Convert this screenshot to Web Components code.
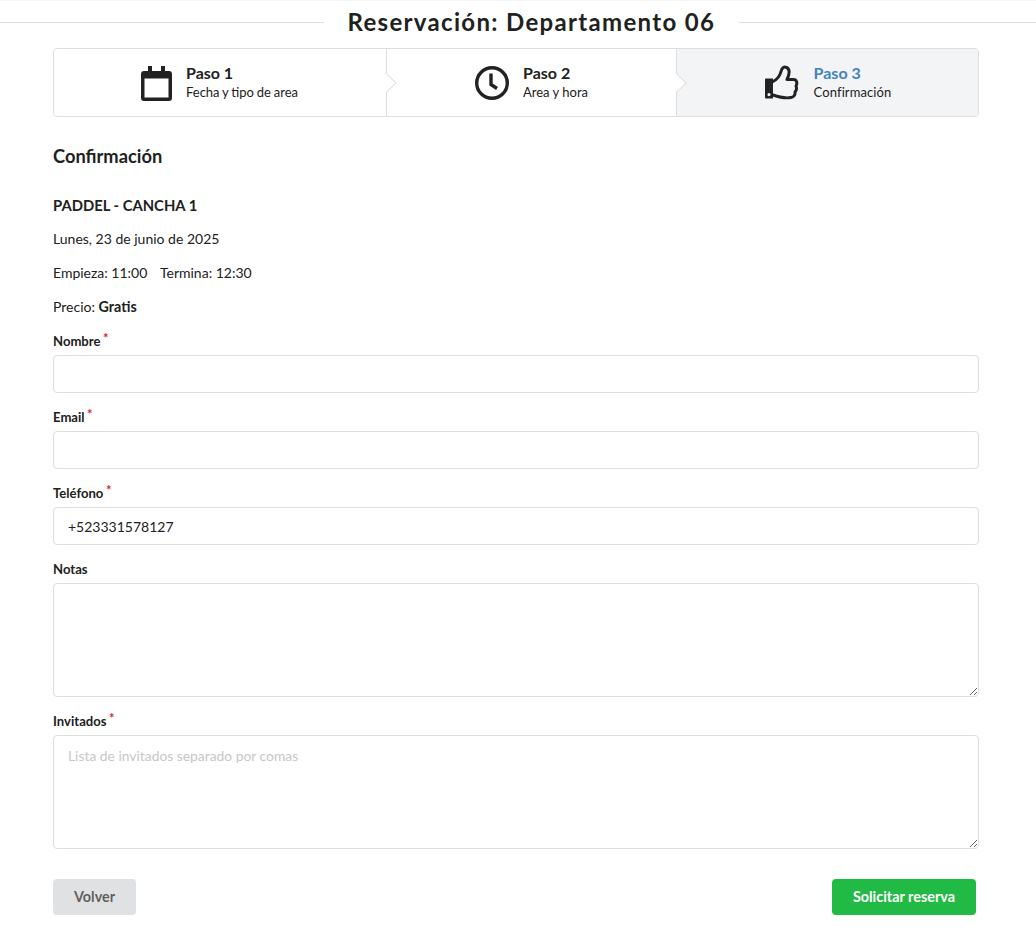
<!DOCTYPE html>
<html lang="es">
<head>
<meta charset="utf-8">
<title>Reservación</title>
<style>
  html, body { margin: 0; background: #fff; }
  body { font: 14px/20px Lato, "Noto Sans", sans-serif; color: rgba(0,0,0,.87); }
</style>
</head>
<body>
<booking-page>
  <page-title>Reservación: Departamento 06</page-title>
  <step-bar>
    <step-item title="Paso 1" desc="Fecha y tipo de area" arrow style="--desc-words:-.5px;--icon-shift:-1px">
      <svg slot="icon" width="31" height="36" viewBox="141 64 31 36"><path fill="#222" fill-rule="evenodd" d="M148 65h4v5h9v-5h4v5h4a3 3 0 0 1 3 3v24a3 3 0 0 1-3 3h-25a3 3 0 0 1-3-3V73a3 3 0 0 1 3-3h4zM144.500 77.500v19h24v-19z"/></svg>
    </step-item>
    <step-item title="Paso 2" desc="Area y hora" arrow>
      <svg slot="icon" width="34" height="34" viewBox="475 65.500 34 34"><circle cx="492" cy="82.500" r="15.300" fill="none" stroke="#222" stroke-width="3.400"/><path d="M491 73v11l6 4" fill="none" stroke="#222" stroke-width="3.400"/></svg>
    </step-item>
    <step-item title="Paso 3" desc="Confirmación" active style="--desc-track:.1px;--icon-shift:1px">
      <svg slot="icon" width="35" height="35" viewBox="764 65.500 35 35"><path fill="#222" fill-rule="evenodd" d="M765 79h7v20h-7a1 1 0 0 1-1-1V80a1 1 0 0 1 1-1zM768 93.500a1.600 1.600 0 1 0 0 3.200a1.600 1.600 0 0 0 0-3.200z"/><path fill="none" stroke="#222" stroke-width="3" stroke-linejoin="round" stroke-linecap="round" d="M772 82C776 80 779 76 780 72C781 68 783 67 785 67.800C789 69 789 74 786 80L792.500 80C796 80 796.500 84 795 86.500C796 89 795.500 91 794 92.500C794.500 95 793 97.500 790 98C785 99 779 98 772 95.500"/></svg>
    </step-item>
  </step-bar>
  <booking-summary></booking-summary>
  <form-field label="Nombre" required></form-field>
  <form-field label="Email" required></form-field>
  <form-field label="Teléfono" required value="+523331578127"></form-field>
  <form-field label="Notas" multiline></form-field>
  <form-field label="Invitados" required multiline placeholder="Lista de invitados separado por comas"></form-field>
  <form-actions>
    <ui-button slot="back">Volver</ui-button>
    <ui-button slot="submit" kind="green">Solicitar reserva</ui-button>
  </form-actions>
</booking-page>

<script>
class BookingPage extends HTMLElement {
  constructor() {
    super();
    this.attachShadow({mode: 'open'}).innerHTML = `
      <style>
        :host { display: block; padding: 0 57px 27px 53px; border-top: 1px solid #f7f7f7; }
      </style>
      <slot></slot>`;
  }
}

class PageTitle extends HTMLElement {
  constructor() {
    super();
    this.attachShadow({mode: 'open'}).innerHTML = `
      <style>
        :host { display: flex; align-items: center; height: 42px; margin: 0 -57px 5px -53px; }
        i { height: 1px; background: #dedede; margin-top: 1px; }
        .left { flex: none; width: 324px; }
        .right { flex: 1; }
        h1 { margin: 0 24px 0 23.500px; font: 700 24px/30px Lato, sans-serif; letter-spacing: 1.320px; color: #212121; white-space: nowrap; }
      </style>
      <i class="left"></i><h1><slot></slot></h1><i class="right"></i>`;
  }
}

class StepBar extends HTMLElement {
  constructor() {
    super();
    this.attachShadow({mode: 'open'}).innerHTML = `
      <style>
        :host { display: grid; grid-template-columns: 333px 290px 1fr; height: 69px; box-sizing: border-box;
          border: 1px solid #dedede; border-radius: 4px; }
      </style>
      <slot></slot>`;
  }
}

class StepItem extends HTMLElement {
  constructor() {
    super();
    const title = this.getAttribute('title');
    const desc = this.getAttribute('desc');
    this.removeAttribute('title');
    this.attachShadow({mode: 'open'}).innerHTML = `
      <style>
        :host { display: flex; position: relative; align-items: center; justify-content: center; gap: 14px;
          border-right: 1px solid #dedede; background: #fff; border-radius: 4px 0 0 4px; }
        :host([active]) { background: #f3f4f5; border-right: 0; border-radius: 0 3px 3px 0; }
        :host([arrow])::after { content: ""; position: absolute; z-index: 2; top: 50%; right: 0; width: 15px; height: 15px;
          box-sizing: border-box; background: #fff; border: solid #dedede; border-width: 1px 1px 0 0;
          transform: translate(50%, -50%) rotate(45deg); }
        ::slotted(svg) { display: block; flex: none; margin-left: var(--icon-shift, 0); }
        .title { font-size: 16px; font-weight: 700; line-height: 16px; margin-bottom: 2px; color: #212121; }
        :host([active]) .title { color: #4183c4; }
        .desc { font-size: 13px; line-height: 18px; color: #212121;
          word-spacing: var(--desc-words, 0); letter-spacing: var(--desc-track, 0); }
      </style>
      <slot name="icon"></slot>
      <div><div class="title">${title}</div><div class="desc">${desc}</div></div>`;
  }
}

class BookingSummary extends HTMLElement {
  constructor() {
    super();
    this.attachShadow({mode: 'open'}).innerHTML = `
      <style>
        :host { display: block; color: #212121; }
        h2 { margin: 29px 0 28px; font: 700 18.300px/21px Lato, sans-serif; }
        h3 { margin: 0 0 14px; font: 700 14.800px/20px Lato, sans-serif; }
        p { margin: 0 0 14px; }
        b { font-weight: 700; font-size: 14.300px; }
        .gap { margin-left: 9px; }
      </style>
      <h2>Confirmación</h2>
      <h3>PADDEL - CANCHA 1</h3>
      <p>Lunes, 23 de junio de 2025</p>
      <p>Empieza: 11:00 <span class="gap">Termina: 12:30</span></p>
      <p>Precio: <b>Gratis</b></p>`;
  }
}

class FormField extends HTMLElement {
  constructor() {
    super();
    const label = this.getAttribute('label');
    const value = this.getAttribute('value') || '';
    const placeholder = this.getAttribute('placeholder') || '';
    const control = this.hasAttribute('multiline')
      ? `<textarea placeholder="${placeholder}">${value}</textarea>`
      : `<input type="text" value="${value}" placeholder="${placeholder}">`;
    const star = this.hasAttribute('required') ? '<span>*</span>' : '';
    this.attachShadow({mode: 'open'}).innerHTML = `
      <style>
        :host { display: block; margin-bottom: 14px; }
        label { display: block; margin-bottom: 4px; font-size: 13.100px; font-weight: 700; line-height: 20px; color: #212121; }
        span { color: #db2828; margin-left: 2.500px; position: relative; top: -3px; font-size: 13px; line-height: 1; }
        input, textarea { display: block; width: 100%; box-sizing: border-box; margin: 0; padding: 9px 14px;
          border: 1px solid #dedede; border-radius: 4px; outline: 0; background: #fff;
          font: 14px/18px Lato, sans-serif; color: #212121; }
        input { height: 38px; }
        textarea { height: 114px; padding: 11px 14px; resize: vertical; }
        textarea::placeholder { font-size: 13.850px; }
        ::placeholder { color: #c7c7c7; opacity: 1; }
      </style>
      <label>${label}${star}</label>${control}`;
  }
}

class FormActions extends HTMLElement {
  constructor() {
    super();
    this.attachShadow({mode: 'open'}).innerHTML = `
      <style>
        :host { display: flex; justify-content: space-between; margin-top: 30px; padding-right: 3px; }
      </style>
      <slot name="back"></slot><slot name="submit"></slot>`;
  }
}

class UiButton extends HTMLElement {
  constructor() {
    super();
    this.attachShadow({mode: 'open'}).innerHTML = `
      <style>
        :host { display: block; }
        button { display: block; height: 36px; padding: 0 21px; border: 0; border-radius: 4px; background: #e0e1e2;
          font: 700 14.400px/16px Lato, sans-serif; color: rgba(0,0,0,.6); }
        :host([kind="green"]) button { background: #21ba45; color: #fff; }
      </style>
      <button type="button"><slot></slot></button>`;
  }
}

customElements.define('booking-page', BookingPage);
customElements.define('page-title', PageTitle);
customElements.define('step-bar', StepBar);
customElements.define('step-item', StepItem);
customElements.define('booking-summary', BookingSummary);
customElements.define('form-field', FormField);
customElements.define('form-actions', FormActions);
customElements.define('ui-button', UiButton);
</script>
</body>
</html>
